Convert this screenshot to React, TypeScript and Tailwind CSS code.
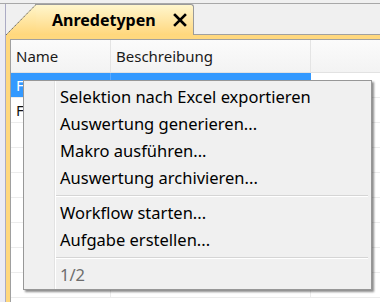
import React from "react";

const font = { fontFamily: '"Noto Sans", "Open Sans", sans-serif' };

function Tab() {
  return (
    <div className="flex h-[31px] items-stretch">
      {/* slanted left edge of the tab */}
      <svg width="30" height="31" viewBox="0 0 30 31" className="block shrink-0">
        <defs>
          <linearGradient id="tabg" x1="0" y1="0" x2="0" y2="1">
            <stop offset="0" stopColor="#fff6cc" />
            <stop offset="1" stopColor="#ffd77c" />
          </linearGradient>
        </defs>
        <polygon points="0,31 30,0 30,31" fill="url(#tabg)" />
        <line x1="0" y1="31" x2="30" y2="0.5" stroke="#6b6b6b" strokeWidth="1" strokeDasharray="1.5 0.6" />
        <line x1="29" y1="0.5" x2="30" y2="0.5" stroke="#9a9a9a" />
      </svg>
      <div className="w-[158px] shrink-0 flex items-center pl-[16px] border-t border-r border-[#9a9a9a] rounded-tr-[3px] bg-linear-to-b from-[#fff6cc] to-[#ffd77c]">
        <span className="text-[16px] font-bold text-black leading-none">Anredetypen</span>
        <svg width="14" height="14" viewBox="0 0 14 14" className="ml-[17px]">
          <path d="M2 2 L12 12 M12 2 L2 12" stroke="#000" strokeWidth="2.6" strokeLinecap="square" />
        </svg>
      </div>
      <div className="flex-1 border-b border-[#a0a0a0]" />
    </div>
  );
}

function Row({ selected, label }: { selected?: boolean; label?: string }) {
  return (
    <div className="flex h-[25px] border-b border-[#ececec]">
      <div
        className={
          "w-[100px] flex items-center pl-[5px] border-r " +
          (selected ? "bg-[#3399ff] text-white border-[#5aa9ff]" : "text-[#111] border-[#ececec]")
        }
      >
        {label}
      </div>
      <div className={"w-[200px] border-r " + (selected ? "bg-[#3399ff] border-[#3399ff]" : "border-[#ececec]")} />
      <div className="flex-1" />
    </div>
  );
}

function Separator() {
  return (
    <div className="h-[8px] flex flex-col justify-center pr-[3px]">
      <div className="h-px bg-[#d5d5d5]" />
      <div className="h-px bg-white" />
    </div>
  );
}

function Item({ children, disabled }: { children: React.ReactNode; disabled?: boolean }) {
  return (
    <div className={"h-[27px] flex items-center pl-[4px] text-[16.5px] " + (disabled ? "text-[#6d6d6d]" : "text-black")}>
      {children}
    </div>
  );
}

export default function App() {
  return (
    <div className="w-[380px] h-[302px] bg-[#f0f0f0] overflow-hidden relative flex flex-col" style={font}>
      <div className="h-[4px] shrink-0 border-b border-[#a8a8a8]" />
      <div className="flex-1 flex">
        <div className="w-[5px] flex flex-col">
          <div className="h-[31px]" />
          <div className="flex-1 bg-[#ececf5]" />
        </div>
        <div className="flex-1 flex flex-col border-l border-[#ababc4]">
          <Tab />
          <div className="flex-1 bg-[#ffd87e] pt-[4px] pl-[4px] flex flex-col">
            <div className="flex-1 bg-white border-t border-l border-[#a0a0a0] flex flex-col text-[15px]">
              {/* header */}
              <div className="flex h-[33px] border-b border-[#e2e2e2] bg-linear-to-b from-[#fbfbfb] to-[#f3f3f3] text-[#1a1a1a]">
                <div className="w-[100px] flex items-center pl-[5px] border-r border-[#e4e4e4]">Name</div>
                <div className="w-[200px] flex items-center pl-[5px] border-r border-[#e4e4e4]">Beschreibung</div>
                <div className="flex-1" />
              </div>
              <Row selected label="F" />
              <Row label="F" />
              <Row />
              <Row />
              <Row />
              <Row />
              <Row />
              <Row />
              <Row />
            </div>
          </div>
        </div>
      </div>

      {/* context menu */}
      <div className="absolute left-[23px] top-[80px] w-[349px] h-[210px] bg-[#f0f0f0] border border-[#979797] shadow-[2px_2px_2px_rgba(0,0,0,0.45)] flex">
        <div className="w-[31px] border-r border-[#e2e2e2]" />
        <div className="flex-1 border-l border-white flex flex-col pt-[3px]">
          <Item>Selektion nach Excel exportieren</Item>
          <Item>Auswertung generieren...</Item>
          <Item>Makro ausführen...</Item>
          <Item>Auswertung archivieren...</Item>
          <Separator />
          <Item>Workflow starten...</Item>
          <Item>Aufgabe erstellen...</Item>
          <Separator />
          <Item disabled>1/2</Item>
        </div>
      </div>
    </div>
  );
}
